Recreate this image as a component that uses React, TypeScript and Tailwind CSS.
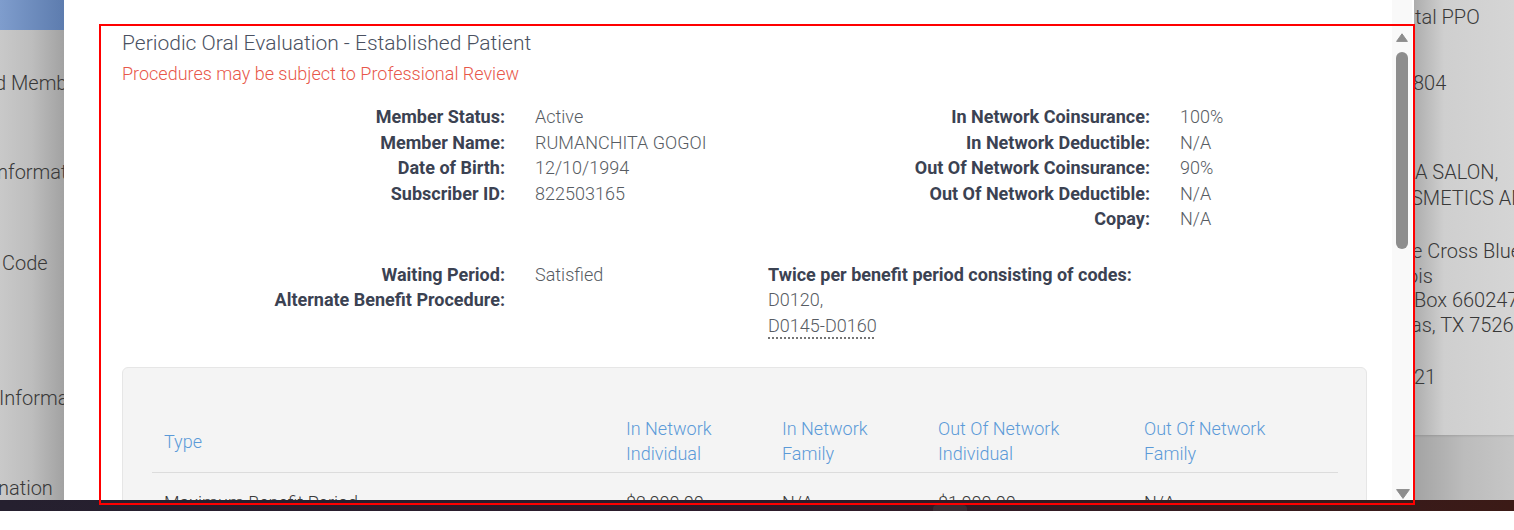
import React from "react";

const labelCls = "text-right font-bold text-[#3b4252]";
const valueCls = "font-light text-[#575c63]";

type Row = [string, string, string, string];

const memberRows: Row[] = [
  ["Member Status:", "Active", "In Network Coinsurance:", "100%"],
  ["Member Name:", "RUMANCHITA GOGOI", "In Network Deductible:", "N/A"],
  ["Date of Birth:", "12/10/1994", "Out Of Network Coinsurance:", "90%"],
  ["Subscriber ID:", "822503165", "Out Of Network Deductible:", "N/A"],
  ["", "", "Copay:", "N/A"],
];

const headers = [
  { label: "Type", w: "w-[462px]" },
  { label: "In Network Individual", w: "w-[156px]" },
  { label: "In Network Family", w: "w-[156px]" },
  { label: "Out Of Network Individual", w: "w-[206px]" },
  { label: "Out Of Network Family", w: "w-[206px]" },
];

const bodyRows = [["Maximum Benefit Period", "$2,000.00", "N/A", "$1,000.00", "N/A"]];

function InfoGrid({ children }: { children: React.ReactNode }) {
  return (
    <div className="grid grid-cols-[383px_203px_382px_1fr] gap-x-[30px] text-[18px] leading-[25.5px]">
      {children}
    </div>
  );
}

function Scrollbar() {
  return (
    <div className="w-[20px] h-full bg-[#f9f9f9] flex flex-col items-center">
      <svg width="12" height="9" viewBox="0 0 12 9" className="mt-[33px] ml-[-1px]">
        <path d="M6 0.8 L11.4 8.4 L0.6 8.4 Z" fill="#8d8d8d" stroke="#8d8d8d" strokeWidth="1" strokeLinejoin="round" />
      </svg>
      <div className="mt-[10px] w-[12px] h-[197px] rounded-full bg-[#8d8d8d]" />
      <div className="flex-1" />
      <svg width="14" height="10" viewBox="0 0 14 10" className="mb-[1px] ml-[2px]">
        <path d="M0.6 0.6 L13.4 0.6 L7 9.4 Z" fill="#8d8d8d" stroke="#8d8d8d" strokeWidth="1" strokeLinejoin="round" />
      </svg>
    </div>
  );
}

function LeftBackdrop() {
  return (
    <div className="w-[64px] h-full overflow-hidden flex flex-col bg-linear-to-r from-[#c9c9c9] via-[#bdbdbd] to-[#a2a2a2] text-[20px] font-light leading-[25px] text-[#383838] whitespace-nowrap">
      <div className="h-[30px] shrink-0 bg-linear-to-r from-[#7f9dcd] to-[#5d7cae]" />
      <div className="mt-[41px] ml-[-5px]">d Members</div>
      <div className="mt-[64px] ml-[-3px]">nformation</div>
      <div className="mt-[66px] ml-[2px]">Code</div>
      <div className="mt-[110px] ml-[-1px]">Information</div>
      <div className="mt-[65px] ml-[-2px]">nation</div>
    </div>
  );
}

function RightBackdrop() {
  return (
    <div className="w-[100px] h-full overflow-hidden flex flex-col text-[20px] font-light leading-[25px] text-[#383838] whitespace-nowrap bg-linear-to-r from-[#a3a3a3] via-[#bcbcbc] to-[#c6c6c6]">
      <div className="h-[435px] shrink-0 flex flex-col bg-linear-to-r from-[#adadad] via-[#cfcfcf] via-30% to-[#d5d5d5] shadow-[0_1px_2px_rgba(0,0,0,0.12)]">
        <div className="mt-[5px] ml-[1px]">tal PPO</div>
        <div className="mt-[41px] ml-[-1px]">804</div>
        <div className="mt-[64px] ml-[1px]">A SALON,</div>
        <div className="mt-[1px] ml-[-3px]">SMETICS AND</div>
        <div className="mt-[28px] ml-[-2px]">e Cross Blue</div>
        <div className="ml-[-7px]">ois</div>
        <div className="mt-[-1px]">Box 660247</div>
        <div className="ml-[-3px]">as, TX 75266</div>
        <div className="mt-[27px]">21</div>
      </div>
    </div>
  );
}

function ModalBody() {
  return (
    <div className="flex-1 h-full overflow-hidden pl-[58px] pr-[25px] pt-[31px] font-['Roboto',sans-serif]">
      <h2 className="text-[21px] leading-[24px] font-light text-[#4a5161]">
        Periodic Oral Evaluation - Established Patient
      </h2>
      <p className="mt-[7px] text-[18px] leading-[24px] font-light text-[#e8574a]">
        Procedures may be subject to Professional Review
      </p>

      <div className="mt-[18px]">
        <InfoGrid>
          {memberRows.map((r, i) => (
            <React.Fragment key={i}>
              <div className={labelCls}>{r[0]}</div>
              <div className={valueCls}>{r[1]}</div>
              <div className={labelCls}>{r[2]}</div>
              <div className={valueCls}>{r[3]}</div>
            </React.Fragment>
          ))}
        </InfoGrid>
      </div>

      <div className="mt-[30px]">
        <InfoGrid>
          <div className={labelCls}>Waiting Period:</div>
          <div className={valueCls}>Satisfied</div>
          <div className="col-span-2 font-bold text-[#3b4252]">Twice per benefit period consisting of codes:</div>

          <div className={labelCls}>Alternate Benefit Procedure:</div>
          <div />
          <div className={`col-span-2 ${valueCls}`}>D0120,</div>

          <div />
          <div />
          <div className={`col-span-2 ${valueCls}`}>
            <span className="underline decoration-dotted decoration-[#666] underline-offset-[6px]">D0145-D0160</span>
          </div>
        </InfoGrid>
      </div>

      <div className="mt-[29px] rounded-[6px] border border-[#e6e6e6] bg-[#f4f4f4] pt-[40px] pl-[29px] pr-[28px] pb-[30px]">
        <table className="w-full border-collapse text-[18px] leading-[25px]">
          <thead>
            <tr className="border-b border-[#dcdcdc]">
              {headers.map((h) => (
                <th key={h.label} className={`${h.w} px-[12px] pt-[8px] pb-[6px] text-left align-middle font-light text-[#5b9ad8]`}>
                  {h.label === "Type" ? (
                    h.label
                  ) : (
                    <>
                      {h.label.split(" ").slice(0, -1).join(" ")}
                      <br />
                      {h.label.split(" ").slice(-1)[0]}
                    </>
                  )}
                </th>
              ))}
            </tr>
          </thead>
          <tbody>
            {bodyRows.map((r, i) => (
              <tr key={i}>
                {r.map((c, j) => (
                  <td key={j} className="px-[12px] pt-[17px] pb-[12px] font-light text-[#3a3a3a]">
                    {c}
                  </td>
                ))}
              </tr>
            ))}
          </tbody>
        </table>
      </div>
    </div>
  );
}

export default function App() {
  return (
    <div className="relative w-[1514px] h-[530px] overflow-hidden bg-white font-['Roboto',sans-serif]">
      <div className="flex h-[500px]">
        <LeftBackdrop />
        <div className="w-[1350px] h-full bg-white flex">
          <ModalBody />
          <Scrollbar />
          <div className="w-[2px]" />
        </div>
        <RightBackdrop />
      </div>
      <div className="h-[11px] bg-linear-to-r from-[#25202f] via-[#2c1b2b] to-[#3b1a16] flex">
        <div className="ml-[933px] mt-[5px] w-[34px] h-[6px] rounded-t-[4px] bg-[#3a2c33]" />
      </div>

      {/* annotation frame */}
      <div className="absolute left-[99px] top-[24px] w-[1316px] h-[481px] border-2 border-[#ff0000] pointer-events-none" />
    </div>
  );
}
